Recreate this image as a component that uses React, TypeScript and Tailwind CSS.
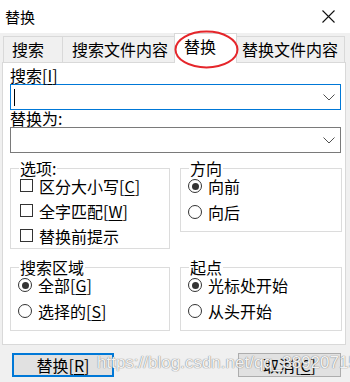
import React from 'react';

const Key = ({ k }: { k: string }) => (
  <>
    [<span className="underline underline-offset-2">{k}</span>]
  </>
);

const Chevron = () => (
  <svg width="12" height="7" viewBox="0 0 12 7" className="mr-[5px]">
    <polyline points="0.5,0.5 6,6 11.5,0.5" fill="none" stroke="#505050" strokeWidth="1" />
  </svg>
);

const Checkbox = ({ children }: { children: React.ReactNode }) => (
  <div className="flex h-[25px] items-center gap-[6px] pl-[9px]">
    <span className="block h-[13px] w-[13px] border border-[#333333] bg-white" />
    <span>{children}</span>
  </div>
);

const Radio = ({ checked, children }: { checked?: boolean; children: React.ReactNode }) => (
  <div className="flex h-[26px] items-center gap-[6px] pl-[7px]">
    <span className="flex h-[14px] w-[14px] items-center justify-center rounded-full border border-[#333333] bg-white">
      {checked && <span className="block h-[7px] w-[7px] rounded-full bg-[#333333]" />}
    </span>
    <span>{children}</span>
  </div>
);

const Group = ({ title, className, children }: { title: string; className: string; children: React.ReactNode }) => (
  <fieldset className={`border border-[#dcdcdc] ${className}`}>
    <legend className="ml-[8px] px-[1px] leading-[10px]">{title}</legend>
    {children}
  </fieldset>
);

export default function App() {
  const tabs = [
    { label: '搜索', cls: 'ml-[3px] w-[59px] pl-[8px]' },
    { label: '搜索文件内容', cls: 'w-[112px] pl-[9px]' },
  ];

  return (
    <div className="relative h-[382px] w-[350px] overflow-hidden bg-[#f0f0f0] font-['Noto_Sans_CJK_SC',sans-serif] text-[16px] text-black">
      {/* Title bar */}
      <div className="flex h-[33px] items-center justify-between bg-white">
        <span className="ml-[5px] text-[15px] leading-[20px]">替换</span>
        <svg width="13" height="13" viewBox="0 0 13 13" className="mr-[15px]">
          <path d="M0.5 0.5 L12.5 12.5 M12.5 0.5 L0.5 12.5" stroke="#111" strokeWidth="1.1" />
        </svg>
      </div>

      {/* Tabs */}
      <div className="flex h-[29px] items-end">
        {tabs.map((t) => (
          <div
            key={t.label}
            className={`h-[26px] border-l border-t border-[#d9d9d9] bg-[#f0f0f0] leading-[25px] ${t.cls}`}
          >
            {t.label}
          </div>
        ))}
        <div className="relative z-10 -mb-px h-[30px] w-[63px] border-l border-r border-t border-[#d9d9d9] bg-white pl-[9px] leading-[24px]">
          替换
        </div>
        <div className="h-[26px] w-[108px] border-r border-t border-[#d9d9d9] bg-[#f0f0f0] pl-[5px] leading-[25px]">
          替换文件内容
        </div>
      </div>

      {/* Panel */}
      <div className="ml-[2px] h-[283px] w-[344px] border border-[#d9d9d9] bg-white pl-[7px]">
        <div className="pt-[3px] leading-[18px]">
          搜索<Key k="I" />
        </div>
        <div className="flex h-[26px] w-[331px] items-center justify-between border border-[#0078d7] bg-white">
          <span className="ml-[3px] block h-[17px] w-px bg-black" />
          <Chevron />
        </div>
        <div className="leading-[17px]">替换为:</div>
        <div className="flex h-[26px] w-[331px] items-center justify-end border border-[#7a7a7a] bg-white">
          <Chevron />
        </div>

        <div className="mt-[10px] flex gap-[10px]">
          <Group title="选项:" className="w-[160px] self-start">
            <Checkbox>
              区分大小写<Key k="C" />
            </Checkbox>
            <Checkbox>
              全字匹配<Key k="W" />
            </Checkbox>
            <Checkbox>替换前提示</Checkbox>
          </Group>
          <Group title="方向" className="w-[162px] self-start pb-[6px]">
            <Radio checked>向前</Radio>
            <Radio>向后</Radio>
          </Group>
        </div>

        <div className="mt-[13px] flex gap-[10px]">
          <Group title="搜索区域" className="w-[160px] pb-[6px]">
            <Radio checked>
              全部<Key k="G" />
            </Radio>
            <Radio>
              选择的<Key k="S" />
            </Radio>
          </Group>
          <Group title="起点" className="w-[162px] pb-[6px]">
            <Radio checked>光标处开始</Radio>
            <Radio>从头开始</Radio>
          </Group>
        </div>
      </div>

      {/* Buttons */}
      <div className="mt-[8px] flex justify-between pl-[12px] pr-[9px]">
        <button className="h-[24px] w-[102px] border-2 border-[#0078d7] bg-[#e1e1e1] leading-[18px]">
          替换<Key k="R" />
        </button>
        <button className="h-[24px] w-[103px] border border-[#adadad] bg-[#e1e1e1] leading-[20px]">
          取消<Key k="C" />
        </button>
      </div>

      {/* Annotation ellipse */}
      <svg className="pointer-events-none absolute left-[174px] top-[30px] z-20" width="65" height="39" viewBox="0 0 65 39">
        <ellipse cx="32.5" cy="19.5" rx="31" ry="18" fill="none" stroke="#e5262b" strokeWidth="2" />
      </svg>

      {/* Watermark */}
      <div className="pointer-events-none absolute left-[97px] top-[351px] z-20 font-['Liberation_Sans',sans-serif] text-[17px] leading-[24px] text-white/90 [text-shadow:0_0_1px_#777,0_0_1px_#999]">
        https://blog.csdn.net/qq_38920715
      </div>
    </div>
  );
}
